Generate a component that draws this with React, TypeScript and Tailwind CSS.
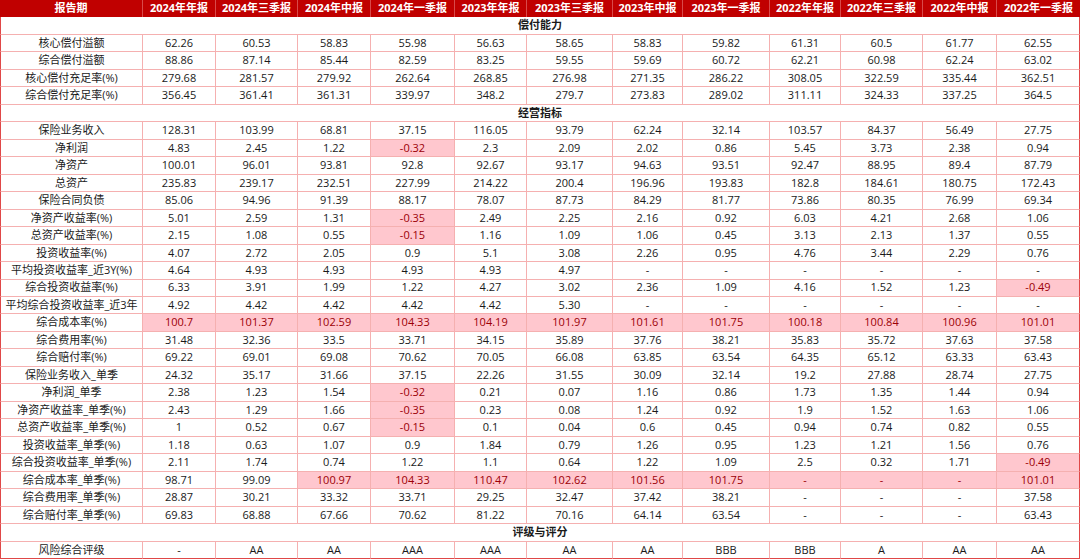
import React from "react";

type Cell = string | [string, true];

type Row =
  | { kind: "section"; title: string }
  | { kind: "data"; label: string; cells: Cell[] };

const H = (v: string): Cell => [v, true];

const headers = [
  "2024年年报",
  "2024年三季报",
  "2024年中报",
  "2024年一季报",
  "2023年年报",
  "2023年三季报",
  "2023年中报",
  "2023年一季报",
  "2022年年报",
  "2022年三季报",
  "2022年中报",
  "2022年一季报",
];

const rows: Row[] = [
  { kind: "section", title: "偿付能力" },
  { kind: "data", label: "核心偿付溢额", cells: ["62.26", "60.53", "58.83", "55.98", "56.63", "58.65", "58.83", "59.82", "61.31", "60.5", "61.77", "62.55"] },
  { kind: "data", label: "综合偿付溢额", cells: ["88.86", "87.14", "85.44", "82.59", "83.25", "59.55", "59.69", "60.72", "62.21", "60.98", "62.24", "63.02"] },
  { kind: "data", label: "核心偿付充足率(%)", cells: ["279.68", "281.57", "279.92", "262.64", "268.85", "276.98", "271.35", "286.22", "308.05", "322.59", "335.44", "362.51"] },
  { kind: "data", label: "综合偿付充足率(%)", cells: ["356.45", "361.41", "361.31", "339.97", "348.2", "279.7", "273.83", "289.02", "311.11", "324.33", "337.25", "364.5"] },
  { kind: "section", title: "经营指标" },
  { kind: "data", label: "保险业务收入", cells: ["128.31", "103.99", "68.81", "37.15", "116.05", "93.79", "62.24", "32.14", "103.57", "84.37", "56.49", "27.75"] },
  { kind: "data", label: "净利润", cells: ["4.83", "2.45", "1.22", H("-0.32"), "2.3", "2.09", "2.02", "0.86", "5.45", "3.73", "2.38", "0.94"] },
  { kind: "data", label: "净资产", cells: ["100.01", "96.01", "93.81", "92.8", "92.67", "93.17", "94.63", "93.51", "92.47", "88.95", "89.4", "87.79"] },
  { kind: "data", label: "总资产", cells: ["235.83", "239.17", "232.51", "227.99", "214.22", "200.4", "196.96", "193.83", "182.8", "184.61", "180.75", "172.43"] },
  { kind: "data", label: "保险合同负债", cells: ["85.06", "94.96", "91.39", "88.17", "78.07", "87.73", "84.29", "81.77", "73.86", "80.35", "76.99", "69.34"] },
  { kind: "data", label: "净资产收益率(%)", cells: ["5.01", "2.59", "1.31", H("-0.35"), "2.49", "2.25", "2.16", "0.92", "6.03", "4.21", "2.68", "1.06"] },
  { kind: "data", label: "总资产收益率(%)", cells: ["2.15", "1.08", "0.55", H("-0.15"), "1.16", "1.09", "1.06", "0.45", "3.13", "2.13", "1.37", "0.55"] },
  { kind: "data", label: "投资收益率(%)", cells: ["4.07", "2.72", "2.05", "0.9", "5.1", "3.08", "2.26", "0.95", "4.76", "3.44", "2.29", "0.76"] },
  { kind: "data", label: "平均投资收益率_近3Y(%)", cells: ["4.64", "4.93", "4.93", "4.93", "4.93", "4.97", "-", "-", "-", "-", "-", "-"] },
  { kind: "data", label: "综合投资收益率(%)", cells: ["6.33", "3.91", "1.99", "1.22", "4.27", "3.02", "2.36", "1.09", "4.16", "1.52", "1.23", H("-0.49")] },
  { kind: "data", label: "平均综合投资收益率_近3年", cells: ["4.92", "4.42", "4.42", "4.42", "4.42", "5.30", "-", "-", "-", "-", "-", "-"] },
  { kind: "data", label: "综合成本率(%)", cells: [H("100.7"), H("101.37"), H("102.59"), H("104.33"), H("104.19"), H("101.97"), H("101.61"), H("101.75"), H("100.18"), H("100.84"), H("100.96"), H("101.01")] },
  { kind: "data", label: "综合费用率(%)", cells: ["31.48", "32.36", "33.5", "33.71", "34.15", "35.89", "37.76", "38.21", "35.83", "35.72", "37.63", "37.58"] },
  { kind: "data", label: "综合赔付率(%)", cells: ["69.22", "69.01", "69.08", "70.62", "70.05", "66.08", "63.85", "63.54", "64.35", "65.12", "63.33", "63.43"] },
  { kind: "data", label: "保险业务收入_单季", cells: ["24.32", "35.17", "31.66", "37.15", "22.26", "31.55", "30.09", "32.14", "19.2", "27.88", "28.74", "27.75"] },
  { kind: "data", label: "净利润_单季", cells: ["2.38", "1.23", "1.54", H("-0.32"), "0.21", "0.07", "1.16", "0.86", "1.73", "1.35", "1.44", "0.94"] },
  { kind: "data", label: "净资产收益率_单季(%)", cells: ["2.43", "1.29", "1.66", H("-0.35"), "0.23", "0.08", "1.24", "0.92", "1.9", "1.52", "1.63", "1.06"] },
  { kind: "data", label: "总资产收益率_单季(%)", cells: ["1", "0.52", "0.67", H("-0.15"), "0.1", "0.04", "0.6", "0.45", "0.94", "0.74", "0.82", "0.55"] },
  { kind: "data", label: "投资收益率_单季(%)", cells: ["1.18", "0.63", "1.07", "0.9", "1.84", "0.79", "1.26", "0.95", "1.23", "1.21", "1.56", "0.76"] },
  { kind: "data", label: "综合投资收益率_单季(%)", cells: ["2.11", "1.74", "0.74", "1.22", "1.1", "0.64", "1.22", "1.09", "2.5", "0.32", "1.71", H("-0.49")] },
  { kind: "data", label: "综合成本率_单季(%)", cells: ["98.71", "99.09", H("100.97"), H("104.33"), H("110.47"), H("102.62"), H("101.56"), H("101.75"), H("-"), H("-"), H("-"), H("101.01")] },
  { kind: "data", label: "综合费用率_单季(%)", cells: ["28.87", "30.21", "33.32", "33.71", "29.25", "32.47", "37.42", "38.21", "-", "-", "-", "37.58"] },
  { kind: "data", label: "综合赔付率_单季(%)", cells: ["69.83", "68.88", "67.66", "70.62", "81.22", "70.16", "64.14", "63.54", "-", "-", "-", "63.43"] },
  { kind: "section", title: "评级与评分" },
  { kind: "data", label: "风险综合评级", cells: ["-", "AA", "AA", "AAA", "AAA", "AA", "AA", "BBB", "BBB", "A", "AA", "AA"] },
];

export default function App() {
  const lastIndex = rows.length - 1;
  return (
    <div
      className="w-[1080px] h-[559px] bg-white overflow-hidden text-[11px] text-[#1a1a1a]"
      style={{ fontFamily: '"Open Sans", "Noto Sans CJK SC", sans-serif' }}
    >
      <div className="grid h-full w-full grid-cols-[143px_73px_82px_73px_84px_72px_86px_70px_87px_71px_82px_74px_83px] grid-rows-[repeat(32,minmax(0,1fr))]">
        {/* header */}
        <div className="flex items-center justify-center bg-[#c00000] text-white font-bold border-r border-[#d84a4a] whitespace-nowrap">
          报告期
        </div>
        {headers.map((h, i) => (
          <div
            key={h}
            className={
              "flex items-center justify-center bg-[#c00000] text-white font-bold whitespace-nowrap " +
              (i < headers.length - 1 ? "border-r border-[#d84a4a]" : "")
            }
          >
            {h}
          </div>
        ))}

        {rows.map((r, ri) => {
          const isLast = ri === lastIndex;
          if (r.kind === "section") {
            return (
              <div
                key={"s" + ri}
                className="col-span-13 flex items-center justify-center font-bold border-l border-r border-b border-l-[#e04848] border-r-[#e04848] border-b-[#f5b0b0] bg-white"
              >
                {r.title}
              </div>
            );
          }
          return (
            <React.Fragment key={"r" + ri}>
              <div
                className={
                  "flex items-center justify-center whitespace-nowrap overflow-visible border-l border-r border-b border-l-[#e04848] border-r-[#f5b0b0] " +
                  (isLast ? "border-b-[#e04848]" : "border-b-[#f5b0b0]")
                }
              >
                {r.label}
              </div>
              {r.cells.map((c, ci) => {
                const hl = Array.isArray(c);
                const v = hl ? c[0] : (c as string);
                const lastCol = ci === r.cells.length - 1;
                return (
                  <div
                    key={ci}
                    className={
                      "flex items-center justify-center whitespace-nowrap border-r border-b " +
                      (lastCol ? "border-r-[#e04848] " : "border-r-[#f5b0b0] ") +
                      (isLast ? "border-b-[#e04848] " : "border-b-[#f5b0b0] ") +
                      (hl ? "bg-[#ffc7ce] text-[#9c0006]" : "bg-white")
                    }
                  >
                    {v}
                  </div>
                );
              })}
            </React.Fragment>
          );
        })}
      </div>
    </div>
  );
}
